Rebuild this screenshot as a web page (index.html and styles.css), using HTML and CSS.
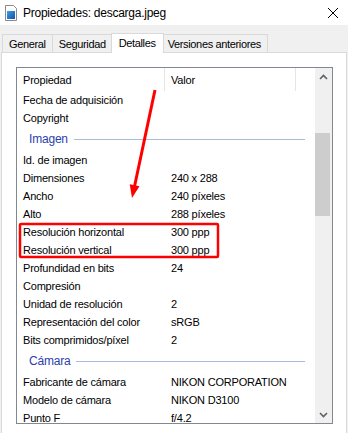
FILE: index.html
```html
<!DOCTYPE html>
<html>
  <head>
    <title>Propiedades: descarga.jpeg</title>
    <link rel="stylesheet" href="styles.css">
  </head>

  <body>
    <div class="window">
      <div class="titlebar">
        <svg class="file-icon" width="16" height="16" viewBox="0 0 16 16">
          <path d="M2.5 0.5h8l3 3v12h-11z" fill="#fff" stroke="#8a8a8a"/>
          <defs>
            <linearGradient id="pic" x1="0" y1="0" x2="1" y2="1">
              <stop offset="0" stop-color="#3aa0e8"/>
              <stop offset="1" stop-color="#1a4fa8"/>
            </linearGradient>
          </defs>
          <rect x="4" y="6" width="8" height="8" fill="url(#pic)"/>
        </svg>
        <span class="title">Propiedades: descarga.jpeg</span>
        <svg class="close" width="10" height="10" viewBox="0 0 10 10">
          <path d="M0 0L10 10M10 0L0 10" stroke="#000" stroke-width="1"/>
        </svg>
      </div>

      <div class="tabs">
        <div class="tab">General</div>
        <div class="tab">Seguridad</div>
        <div class="tab active">Detalles</div>
        <div class="tab">Versiones anteriores</div>
      </div>

      <div class="panel">
        <div class="listbox">
          <div class="list">
            <div class="header">
              <div class="col name">Propiedad</div>
              <div class="col value">Valor</div>
              <div class="col rest"></div>
            </div>

            <div class="row"><span class="name">Fecha de adquisición</span><span class="value"></span></div>
            <div class="row"><span class="name">Copyright</span><span class="value"></span></div>

            <div class="group"><span>Imagen</span></div>
            <div class="row"><span class="name">Id. de imagen</span><span class="value"></span></div>
            <div class="row"><span class="name">Dimensiones</span><span class="value">240 x 288</span></div>
            <div class="row"><span class="name">Ancho</span><span class="value">240 píxeles</span></div>
            <div class="row"><span class="name">Alto</span><span class="value">288 píxeles</span></div>
            <div class="row"><span class="name">Resolución horizontal</span><span class="value">300 ppp</span></div>
            <div class="row"><span class="name">Resolución vertical</span><span class="value">300 ppp</span></div>
            <div class="row"><span class="name">Profundidad en bits</span><span class="value">24</span></div>
            <div class="row"><span class="name">Compresión</span><span class="value"></span></div>
            <div class="row"><span class="name">Unidad de resolución</span><span class="value">2</span></div>
            <div class="row"><span class="name">Representación del color</span><span class="value">sRGB</span></div>
            <div class="row"><span class="name">Bits comprimidos/píxel</span><span class="value">2</span></div>

            <div class="group"><span>Cámara</span></div>
            <div class="row"><span class="name">Fabricante de cámara</span><span class="value">NIKON CORPORATION</span></div>
            <div class="row"><span class="name">Modelo de cámara</span><span class="value">NIKON D3100</span></div>
            <div class="row"><span class="name">Punto F</span><span class="value">f/4.2</span></div>
          </div>

          <div class="scrollbar">
            <div class="arrow">
              <svg width="9" height="6" viewBox="0 0 9 6"><path d="M1 5L4.5 1.5L8 5" fill="none" stroke="#606060" stroke-width="1.6"/></svg>
            </div>
            <div class="track">
              <div class="thumb"></div>
            </div>
            <div class="arrow">
              <svg width="9" height="6" viewBox="0 0 9 6"><path d="M1 1L4.5 4.5L8 1" fill="none" stroke="#606060" stroke-width="1.6"/></svg>
            </div>
          </div>
        </div>
      </div>
    </div>

    <!-- annotation drawn over the dialog -->
    <svg class="annotation" width="348" height="433" viewBox="0 0 348 433">
      <rect x="20" y="224" width="198" height="33" rx="1" fill="none" stroke="#f00" stroke-width="2.5"/>
      <line x1="155" y1="90" x2="134.6" y2="186" stroke="#f00" stroke-width="3"/>
      <polygon points="132,198 139.5,186.3 129.7,184.3" fill="#f00"/>
    </svg>
  </body>
</html>
```

FILE: styles.css
```css
html {
  height: 100%;
}

body {
  margin: 0;
  width: 348px;
  height: 433px;
  overflow: hidden;
  position: relative;
  background: #f0f0f0;
  font-family: "Liberation Sans", Arial, sans-serif;
  font-size: 11px;
  letter-spacing: -0.2px;
  color: #000;
}

.titlebar {
  height: 25px;
  background: #fff;
  display: flex;
  align-items: center;
  padding: 0 10px 0 3px;
}

.file-icon {
  margin-top: 1px;
}

.title {
  margin-left: 4px;
  font-size: 12px;
  letter-spacing: -0.25px;
  flex: 1;
}

.tabs {
  margin-top: 8px;
  height: 20px;
  display: flex;
  align-items: flex-end;
  padding-left: 2px;
  position: relative;
  z-index: 1;
  letter-spacing: -0.35px;
}

.tab {
  height: 17px;
  margin-bottom: 1px;
  padding: 0 6px;
  display: flex;
  align-items: center;
  border: 1px solid #d9d9d9;
  border-bottom: none;
  margin-left: -1px;
}

.tab:first-child {
  margin-left: 0;
}

.tab.active {
  height: 20px;
  margin: 0 -2px 0 -2px;
  padding: 0 7px 2px 7px;
  background: #fff;
  position: relative;
  z-index: 2;
  box-sizing: border-box;
}

.panel {
  margin: -1px 0 0 1px;
  width: 346px;
  height: 390px;
  box-sizing: border-box;
  background: #fff;
  border: 1px solid #d9d9d9;
  padding: 14px 0 0 14px;
}

.listbox {
  width: 317px;
  height: 357px;
  box-sizing: border-box;
  border: 1px solid #828790;
  display: flex;
}

.list {
  flex: 1;
  overflow: hidden;
}

.header {
  height: 23px;
  display: flex;
}

.col {
  box-sizing: border-box;
  height: 23px;
  display: flex;
  align-items: center;
  padding-left: 6px;
}

.col.name {
  width: 148px;
  border-right: 1px solid #e5e5e5;
}

.col.value {
  width: 131px;
  border-right: 1px solid #e5e5e5;
}

.col.rest {
  flex: 1;
}

.row {
  height: 18px;
  display: flex;
  align-items: center;
  white-space: nowrap;
}

.row .name {
  width: 148px;
  padding-left: 6px;
  box-sizing: border-box;
}

.row .value {
  padding-left: 6px;
}

.group {
  height: 24px;
  display: flex;
  align-items: center;
  padding-left: 12px;
  padding-right: 10px;
  color: #2b3eae;
  font-size: 12px;
}

.group::after {
  content: "";
  flex: 1;
  height: 1px;
  margin-left: 6px;
  background: #a9bbe0;
}

.scrollbar {
  width: 17px;
  background: #f0f0f0;
  display: flex;
  flex-direction: column;
}

.arrow {
  height: 17px;
  display: flex;
  align-items: center;
  justify-content: center;
}

.track {
  flex: 1;
  padding-top: 48px;
}

.thumb {
  width: 15px;
  height: 83px;
  background: #cdcdcd;
}

.annotation {
  position: absolute;
  left: 0;
  top: 0;
  pointer-events: none;
  z-index: 5;
}
```
